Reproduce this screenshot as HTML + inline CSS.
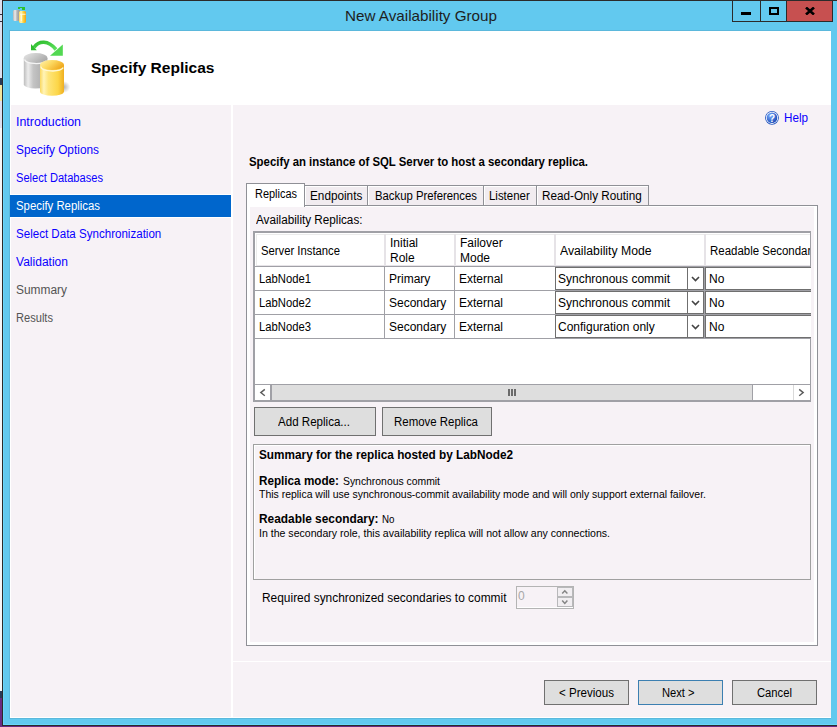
<!DOCTYPE html>
<html><head><meta charset="utf-8"><style>
html,body{margin:0;padding:0;width:837px;height:727px;overflow:hidden;background:#dfe1f0;}
body>div,body>span,body>svg{position:absolute;box-sizing:content-box;}
.t{font-family:"Liberation Sans", sans-serif;line-height:1;white-space:pre;transform-origin:0 0;}
</style></head><body>
<div style="left:0px;top:0px;width:2px;height:703px;background:#f6f6f8;"></div>
<div style="left:0px;top:0px;width:2px;height:128px;background:#dde0ef;"></div>
<div style="left:0px;top:14px;width:2px;height:1px;background:#303040;"></div>
<div style="left:0px;top:21px;width:2px;height:1px;background:#303040;"></div>
<div style="left:0px;top:78px;width:2px;height:7px;background:#2a3b58;"></div>
<div style="left:0px;top:85px;width:2px;height:16px;background:#f2e59e;"></div>
<div style="left:0px;top:691px;width:2px;height:7px;background:#2a3a58;"></div>
<div style="left:0px;top:698px;width:2px;height:29px;background:#6a2a80;"></div>
<div style="left:0px;top:726px;width:837px;height:1px;background:#6a2a80;"></div>
<div style="left:2px;top:0px;width:835px;height:726px;background:#2b2b2b;"></div>
<div style="left:3px;top:1px;width:834px;height:724px;background:#62c9ef;"></div>
<div style="left:3px;top:1px;width:1px;height:724px;background:#6ad6fb;"></div>
<div style="left:3px;top:724px;width:834px;height:1px;background:#6ad6fb;"></div>
<div style="left:9px;top:30px;width:822px;height:689px;background:#5bb8dc;"></div>
<div style="left:10px;top:31px;width:821px;height:74px;background:#ffffff;"></div>
<div style="left:10px;top:105px;width:221px;height:613px;background:#ffffff;"></div>
<div style="left:11px;top:105px;width:220px;height:612px;background:#f7f2f6;"></div>
<div style="left:231px;top:105px;width:2px;height:613px;background:#ffffff;"></div>
<div style="left:233px;top:105px;width:598px;height:613px;background:#ffffff;"></div>
<div style="left:233px;top:105px;width:598px;height:556px;background:#f7f2f6;"></div>
<div style="left:233px;top:662px;width:598px;height:55px;background:#f7f2f6;"></div>
<span id="t0" class="t" style="transform:scaleX(1.0147);left:345px;top:8px;font-size:15px;font-weight:400;color:#1e1e1e;">New Availability Group</span>
<div style="left:732px;top:0px;width:101px;height:22px;background:#2b2b2b;"></div>
<div style="left:733px;top:1px;width:27px;height:20px;background:#62c9ef;"></div>
<div style="left:761px;top:1px;width:25px;height:20px;background:#62c9ef;"></div>
<div style="left:787px;top:1px;width:45px;height:20px;background:#c75050;"></div>
<div style="left:741px;top:12px;width:10px;height:3px;background:#000;"></div>
<div style="left:769px;top:7px;width:6px;height:4px;border:2px solid #000;"></div>
<svg style="left:805px;top:7px" width="10" height="8" viewBox="0 0 10 8"><path d="M1 0.5 L9 7.5 M9 0.5 L1 7.5" stroke="#000" stroke-width="2.6"/></svg>
<svg style="left:0px;top:0px" width="30" height="26" viewBox="0 0 30 26">
<defs><linearGradient id="sg" x1="0" x2="1"><stop offset="0" stop-color="#b4b4b4"/><stop offset="0.3" stop-color="#ececec"/><stop offset="0.55" stop-color="#b8b8b8"/><stop offset="1" stop-color="#8e8e8e"/></linearGradient>
<linearGradient id="sy" x1="0" x2="1"><stop offset="0" stop-color="#fcd860"/><stop offset="0.3" stop-color="#fff4b8"/><stop offset="0.6" stop-color="#fcd440"/><stop offset="1" stop-color="#f0a018"/></linearGradient></defs>
<path d="M14 10 h5 l1 1 v9 l-1 1 h-5 l-1 -1 v-9 z" fill="url(#sg)"/>
<path d="M20 11 h5 l1 1 v10 l-1 1 h-5 l-1 -1 v-10 z" fill="url(#sy)"/>
<path d="M20 14.2 h5.5 M21.3 14 v7" stroke="#fffbe8" stroke-width="1.1" fill="none" opacity="0.9"/>
<g fill="#2dc12d"><rect x="18" y="7" width="2" height="2"/><rect x="19" y="7" width="4" height="1"/><rect x="23" y="7" width="2" height="3"/><rect x="22" y="8" width="2" height="2"/></g>
</svg>
<svg style="left:0px;top:0px" width="80" height="100" viewBox="0 0 80 100">
<defs>
<linearGradient id="gg" x1="0" x2="1"><stop offset="0" stop-color="#bdbdbd"/><stop offset="0.18" stop-color="#ececec"/><stop offset="0.4" stop-color="#c4c4c4"/><stop offset="1" stop-color="#a4a4a4"/></linearGradient>
<linearGradient id="gt" x1="0" y1="0" x2="1" y2="0.6"><stop offset="0" stop-color="#e6e6e6"/><stop offset="0.5" stop-color="#c9c9c9"/><stop offset="1" stop-color="#a9a9a9"/></linearGradient>
<linearGradient id="yg" x1="0" x2="1"><stop offset="0" stop-color="#fad860"/><stop offset="0.16" stop-color="#fff4b8"/><stop offset="0.35" stop-color="#fee57a"/><stop offset="0.75" stop-color="#fcd648"/><stop offset="1" stop-color="#efae20"/></linearGradient>
<linearGradient id="yt" x1="0" y1="0" x2="1" y2="0.5"><stop offset="0" stop-color="#fff2b0"/><stop offset="0.5" stop-color="#fcd860"/><stop offset="1" stop-color="#f0aa20"/></linearGradient>
<radialGradient id="sh" cx="0.3" cy="0.5"><stop offset="0" stop-color="#000" stop-opacity="0.33"/><stop offset="1" stop-color="#000" stop-opacity="0"/></radialGradient>
<linearGradient id="ar" x1="0" y1="0" x2="1" y2="1"><stop offset="0" stop-color="#2fbd2f"/><stop offset="1" stop-color="#5ee25e"/></linearGradient>
</defs>
<ellipse cx="66" cy="87" rx="7" ry="6" fill="url(#sh)"/>
<path d="M23.8 58 v26.5 a11.8 4 0 0 0 23.6 0 v-26.5 z" fill="url(#gg)"/>
<ellipse cx="35.6" cy="58" rx="11.8" ry="5" fill="url(#gt)"/>
<path d="M24.5 59.5 a11.5 4.6 0 0 0 22 1.2" stroke="#f4f4f4" stroke-width="1.3" fill="none"/>
<path d="M40 65 v26.5 a12 4.3 0 0 0 24 0 v-26.5 z" fill="url(#yg)"/>
<ellipse cx="52" cy="65" rx="12" ry="5" fill="url(#yt)"/>
<path d="M40.8 66.5 a11.5 4.6 0 0 0 22.5 1.2" stroke="#fff8d8" stroke-width="1.3" fill="none"/>
<path d="M34 47.5 C 39 40.5, 48 40, 56 49.5" stroke="url(#ar)" stroke-width="3.6" fill="none"/>
<path d="M31 44 L31 50.2 L36.8 50.2 z" fill="#2fbd2f"/>
<path d="M62.8 44.6 L62.8 55.8 L50 55.8 z" fill="#52d852"/>
</svg>
<span id="t1" class="t" style="transform:scaleX(1.0024);left:91px;top:60px;font-size:15.5px;font-weight:700;color:#000;">Specify Replicas</span>
<div style="left:10px;top:194px;width:221px;height:24px;background:#ffffff;"></div>
<div style="left:10px;top:195px;width:221px;height:22px;background:#0066cc;"></div>
<span id="t2" class="t" style="transform:scaleX(1.0364);left:16px;top:116px;font-size:12px;font-weight:400;color:#0a00ff;">Introduction</span>
<span id="t3" class="t" style="transform:scaleX(0.9875);left:16px;top:144px;font-size:12px;font-weight:400;color:#0a00ff;">Specify Options</span>
<span id="t4" class="t" style="transform:scaleX(0.9249);left:16px;top:172px;font-size:12px;font-weight:400;color:#0a00ff;">Select Databases</span>
<span id="t5" class="t" style="transform:scaleX(0.9468);left:16px;top:200px;font-size:12px;font-weight:400;color:#ffffff;">Specify Replicas</span>
<span id="t6" class="t" style="transform:scaleX(0.9638);left:16px;top:228px;font-size:12px;font-weight:400;color:#0a00ff;">Select Data Synchronization</span>
<span id="t7" class="t" style="transform:scaleX(1.0033);left:16px;top:256px;font-size:12px;font-weight:400;color:#0a00ff;">Validation</span>
<span id="t8" class="t" style="transform:scaleX(0.9933);left:16px;top:284px;font-size:12px;font-weight:400;color:#545454;">Summary</span>
<span id="t9" class="t" style="transform:scaleX(0.9246);left:16px;top:312px;font-size:12px;font-weight:400;color:#545454;">Results</span>
<svg style="left:764px;top:110px" width="16" height="16" viewBox="0 0 16 16">
<defs><radialGradient id="hb" cx="0.35" cy="0.3" r="0.8"><stop offset="0" stop-color="#7fb0ff"/><stop offset="1" stop-color="#1040b0"/></radialGradient></defs>
<circle cx="8" cy="7.8" r="6.9" fill="#2456c0"/><circle cx="8" cy="7.8" r="6.1" fill="#ffffff"/><circle cx="8" cy="7.8" r="5.3" fill="url(#hb)"/>
<text x="8" y="12" text-anchor="middle" font-family="Liberation Sans" font-weight="700" font-size="10" fill="#fff">?</text>
</svg>
<span id="t10" class="t" style="transform:scaleX(0.9722);left:784px;top:112px;font-size:12px;font-weight:400;color:#0a00ff;">Help</span>
<span id="t11" class="t" style="transform:scaleX(0.9489);left:249px;top:156px;font-size:12px;font-weight:700;color:#000;">Specify an instance of SQL Server to host a secondary replica.</span>
<div style="left:304px;top:185px;width:64px;height:21px;background:#8f9096;"></div>
<div style="left:305px;top:186px;width:62px;height:19px;background:#ffffff;"></div>
<div style="left:306px;top:187px;width:61px;height:18px;background:#f1ecf0;"></div>
<span id="t12" class="t" style="transform:scaleX(0.9799);left:310px;top:190px;font-size:12px;font-weight:400;color:#000;">Endpoints</span>
<div style="left:367px;top:185px;width:117px;height:21px;background:#8f9096;"></div>
<div style="left:368px;top:186px;width:115px;height:19px;background:#ffffff;"></div>
<div style="left:369px;top:187px;width:114px;height:18px;background:#f1ecf0;"></div>
<span id="t13" class="t" style="transform:scaleX(0.9439);left:375px;top:190px;font-size:12px;font-weight:400;color:#000;">Backup Preferences</span>
<div style="left:483px;top:185px;width:54px;height:21px;background:#8f9096;"></div>
<div style="left:484px;top:186px;width:52px;height:19px;background:#ffffff;"></div>
<div style="left:485px;top:187px;width:51px;height:18px;background:#f1ecf0;"></div>
<span id="t14" class="t" style="transform:scaleX(0.9531);left:489px;top:190px;font-size:12px;font-weight:400;color:#000;">Listener</span>
<div style="left:536px;top:185px;width:113px;height:21px;background:#8f9096;"></div>
<div style="left:537px;top:186px;width:111px;height:19px;background:#ffffff;"></div>
<div style="left:538px;top:187px;width:110px;height:18px;background:#f1ecf0;"></div>
<span id="t15" class="t" style="transform:scaleX(0.9769);left:542px;top:190px;font-size:12px;font-weight:400;color:#000;">Read-Only Routing</span>
<div style="left:246px;top:205px;width:572px;height:441px;background:#8f9096;"></div>
<div style="left:247px;top:206px;width:570px;height:439px;background:#ffffff;"></div>
<div style="left:250px;top:207px;width:564px;height:435px;background:#f7f2f6;"></div>
<div style="left:246px;top:183px;width:59px;height:24px;background:#8f9096;"></div>
<div style="left:247px;top:184px;width:57px;height:23px;background:#ffffff;"></div>
<span id="t16" class="t" style="transform:scaleX(0.9124);left:255px;top:188px;font-size:12px;font-weight:400;color:#000;">Replicas</span>
<span id="t17" class="t" style="transform:scaleX(0.9755);left:256px;top:214px;font-size:12px;font-weight:400;color:#000;">Availability Replicas:</span>
<div style="left:253px;top:231px;width:558px;height:171px;background:#a0a0a6;"></div>
<div style="left:255px;top:233px;width:555px;height:167px;background:#ffffff;"></div>
<div style="left:255px;top:233px;width:555px;height:1px;background:#ffffff;"></div>
<div style="left:256px;top:234px;width:554px;height:1px;background:#ebebeb;"></div>
<div style="left:256px;top:234px;width:1px;height:32px;background:#ebebeb;"></div>
<div style="left:384px;top:234px;width:2px;height:32px;background:#e6e3e7;"></div>
<div style="left:454px;top:234px;width:2px;height:32px;background:#e6e3e7;"></div>
<div style="left:554px;top:234px;width:2px;height:32px;background:#e6e3e7;"></div>
<div style="left:704px;top:234px;width:2px;height:32px;background:#e6e3e7;"></div>
<div style="left:256px;top:265px;width:554px;height:1px;background:#e6e3e7;"></div>
<div style="left:255px;top:266px;width:555px;height:1px;background:#a0a0a6;"></div>
<span id="t18" class="t" style="transform:scaleX(0.9400);left:261px;top:245px;font-size:12px;font-weight:400;color:#000;">Server Instance</span>
<span id="t19" class="t" style="left:390px;top:237px;font-size:12px;font-weight:400;color:#000;">Initial</span>
<span id="t20" class="t" style="left:390px;top:251.5px;font-size:12px;font-weight:400;color:#000;">Role</span>
<span id="t21" class="t" style="left:460px;top:237px;font-size:12px;font-weight:400;color:#000;">Failover</span>
<span id="t22" class="t" style="left:460px;top:251.5px;font-size:12px;font-weight:400;color:#000;">Mode</span>
<span id="t23" class="t" style="transform:scaleX(1.0197);left:560px;top:244.5px;font-size:12px;font-weight:400;color:#000;">Availability Mode</span>
<div style="left:705px;top:234px;width:105px;height:32px;overflow:hidden;"><span class="t" style="position:absolute;left:5px;top:11px;font-size:12px;color:#000;transform:scaleX(0.955)">Readable Secondary</span></div>
<div style="left:255px;top:290px;width:555px;height:1px;background:#a0a0a6;"></div>
<div style="left:384px;top:267px;width:1px;height:23px;background:#a0a0a6;"></div>
<div style="left:454px;top:267px;width:1px;height:23px;background:#a0a0a6;"></div>
<div style="left:704px;top:267px;width:1px;height:23px;background:#a0a0a6;"></div>
<span id="t24" class="t" style="transform:scaleX(0.9388);left:259px;top:273px;font-size:12px;font-weight:400;color:#000;">LabNode1</span>
<span id="t25" class="t" style="left:389px;top:273px;font-size:12px;font-weight:400;color:#000;">Primary</span>
<span id="t26" class="t" style="left:459px;top:273px;font-size:12px;font-weight:400;color:#000;">External</span>
<div style="left:555px;top:267px;width:147px;height:21px;border:1px solid #6f6f6f;background:#ffffff;"></div>
<div style="left:687px;top:268px;width:1px;height:21px;background:#6f6f6f;"></div>
<svg style="left:691px;top:276px" width="9" height="7" viewBox="0 0 9 7"><path d="M1 1 L4.5 4.5 L8 1" stroke="#444" stroke-width="1.6" fill="none"/></svg>
<span id="t27" class="t" style="left:558px;top:273px;font-size:12px;font-weight:400;color:#000;">Synchronous commit</span>
<div style="left:705px;top:267px;width:105px;height:21px;border:1px solid #6f6f6f;border-right:none;background:#fff"></div>
<span id="t28" class="t" style="left:709px;top:273px;font-size:12px;font-weight:400;color:#000;">No</span>
<div style="left:255px;top:314px;width:555px;height:1px;background:#a0a0a6;"></div>
<div style="left:384px;top:291px;width:1px;height:23px;background:#a0a0a6;"></div>
<div style="left:454px;top:291px;width:1px;height:23px;background:#a0a0a6;"></div>
<div style="left:704px;top:291px;width:1px;height:23px;background:#a0a0a6;"></div>
<span id="t29" class="t" style="transform:scaleX(0.9388);left:259px;top:297px;font-size:12px;font-weight:400;color:#000;">LabNode2</span>
<span id="t30" class="t" style="left:389px;top:297px;font-size:12px;font-weight:400;color:#000;">Secondary</span>
<span id="t31" class="t" style="left:459px;top:297px;font-size:12px;font-weight:400;color:#000;">External</span>
<div style="left:555px;top:291px;width:147px;height:21px;border:1px solid #6f6f6f;background:#ffffff;"></div>
<div style="left:687px;top:292px;width:1px;height:21px;background:#6f6f6f;"></div>
<svg style="left:691px;top:300px" width="9" height="7" viewBox="0 0 9 7"><path d="M1 1 L4.5 4.5 L8 1" stroke="#444" stroke-width="1.6" fill="none"/></svg>
<span id="t32" class="t" style="left:558px;top:297px;font-size:12px;font-weight:400;color:#000;">Synchronous commit</span>
<div style="left:705px;top:291px;width:105px;height:21px;border:1px solid #6f6f6f;border-right:none;background:#fff"></div>
<span id="t33" class="t" style="left:709px;top:297px;font-size:12px;font-weight:400;color:#000;">No</span>
<div style="left:255px;top:338px;width:555px;height:1px;background:#a0a0a6;"></div>
<div style="left:384px;top:315px;width:1px;height:23px;background:#a0a0a6;"></div>
<div style="left:454px;top:315px;width:1px;height:23px;background:#a0a0a6;"></div>
<div style="left:704px;top:315px;width:1px;height:23px;background:#a0a0a6;"></div>
<span id="t34" class="t" style="transform:scaleX(0.9388);left:259px;top:321px;font-size:12px;font-weight:400;color:#000;">LabNode3</span>
<span id="t35" class="t" style="left:389px;top:321px;font-size:12px;font-weight:400;color:#000;">Secondary</span>
<span id="t36" class="t" style="left:459px;top:321px;font-size:12px;font-weight:400;color:#000;">External</span>
<div style="left:555px;top:315px;width:147px;height:21px;border:1px solid #6f6f6f;background:#ffffff;"></div>
<div style="left:687px;top:316px;width:1px;height:21px;background:#6f6f6f;"></div>
<svg style="left:691px;top:324px" width="9" height="7" viewBox="0 0 9 7"><path d="M1 1 L4.5 4.5 L8 1" stroke="#444" stroke-width="1.6" fill="none"/></svg>
<span id="t37" class="t" style="left:558px;top:321px;font-size:12px;font-weight:400;color:#000;">Configuration only</span>
<div style="left:705px;top:315px;width:105px;height:21px;border:1px solid #6f6f6f;border-right:none;background:#fff"></div>
<span id="t38" class="t" style="left:709px;top:321px;font-size:12px;font-weight:400;color:#000;">No</span>
<div style="left:255px;top:384px;width:555px;height:1px;background:#a0a0a6;"></div>
<div style="left:255px;top:385px;width:15px;height:15px;background:#ffffff;"></div>
<div style="left:270px;top:384px;width:1px;height:16px;background:#a0a0a6;"></div>
<div style="left:271px;top:384px;width:482px;height:17px;background:#a0a0a6;"></div>
<div style="left:272px;top:385px;width:480px;height:15px;background:#dedede;"></div>
<div style="left:508px;top:389px;width:2px;height:7px;background:#6a6a6a;"></div>
<div style="left:511px;top:389px;width:2px;height:7px;background:#6a6a6a;"></div>
<div style="left:514px;top:389px;width:2px;height:7px;background:#6a6a6a;"></div>
<div style="left:753px;top:385px;width:40px;height:15px;background:#ffffff;"></div>
<div style="left:793px;top:385px;width:1px;height:15px;background:#d9d9d9;"></div>
<div style="left:794px;top:385px;width:15px;height:15px;background:#ffffff;"></div>
<svg style="left:259px;top:388px" width="8" height="10" viewBox="0 0 8 10"><path d="M5.8 1.4 L1.8 4.6 L5.8 7.8" stroke="#5c5c5c" stroke-width="1.4" fill="none"/></svg>
<svg style="left:797px;top:388px" width="8" height="10" viewBox="0 0 8 10"><path d="M2.2 1.4 L6.2 4.6 L2.2 7.8" stroke="#5c5c5c" stroke-width="1.4" fill="none"/></svg>
<div style="left:254px;top:407px;width:120px;height:27px;border:1px solid #707070;background:#dedede;"></div>
<span id="t39" class="t" style="transform:scaleX(0.9636);left:278px;top:416px;font-size:12px;font-weight:400;color:#000;">Add Replica...</span>
<div style="left:382px;top:407px;width:108px;height:27px;border:1px solid #707070;background:#dedede;"></div>
<span id="t40" class="t" style="transform:scaleX(0.9540);left:394px;top:416px;font-size:12px;font-weight:400;color:#000;">Remove Replica</span>
<div style="left:253px;top:444px;width:556px;height:134px;border:1px solid #a0a0a0;background:#f7f2f6;"></div>
<div style="left:254px;top:445px;width:556px;height:1px;background:#ffffff;"></div>
<div style="left:254px;top:445px;width:1px;height:134px;background:#ffffff;"></div>
<span id="t41" class="t" style="transform:scaleX(0.9817);left:259px;top:449px;font-size:12px;font-weight:700;color:#000;">Summary for the replica hosted by LabNode2</span>
<span id="t42" class="t" style="transform:scaleX(0.9752);left:259px;top:474.5px;font-size:12px;font-weight:700;color:#000;">Replica mode:</span>
<span id="t43" class="t" style="transform:scaleX(0.9443);left:343px;top:475.5px;font-size:11px;font-weight:400;color:#000;">Synchronous commit</span>
<span id="t44" class="t" style="transform:scaleX(0.9507);left:259px;top:489px;font-size:11px;font-weight:400;color:#000;">This replica will use synchronous-commit availability mode and will only support external failover.</span>
<span id="t45" class="t" style="transform:scaleX(0.9899);left:259px;top:513px;font-size:12px;font-weight:700;color:#000;">Readable secondary:</span>
<span id="t46" class="t" style="transform:scaleX(0.8889);left:382px;top:514px;font-size:11px;font-weight:400;color:#000;">No</span>
<span id="t47" class="t" style="transform:scaleX(0.9600);left:259px;top:527.5px;font-size:11px;font-weight:400;color:#000;">In the secondary role, this availability replica will not allow any connections.</span>
<span id="t48" class="t" style="transform:scaleX(0.9934);left:262px;top:592px;font-size:12px;font-weight:400;color:#000;">Required synchronized secondaries to commit</span>
<div style="left:516px;top:586px;width:56px;height:21px;border:1px solid #b4b4b4;background:#f7f2f6;"></div>
<span id="t49" class="t" style="left:518px;top:590px;font-size:12px;font-weight:400;color:#a8a8a8;">0</span>
<div style="left:557px;top:587px;width:16px;height:20px;background:#b8b8ba;"></div>
<div style="left:558px;top:588px;width:14px;height:8px;background:#f1eef1;"></div>
<div style="left:558px;top:598px;width:14px;height:8px;background:#f1eef1;"></div>
<div style="left:517px;top:607px;width:56px;height:1px;background:#ffffff;"></div>
<svg style="left:560px;top:589px" width="10" height="6" viewBox="0 0 10 6"><path d="M2.2 4.6 L4.8 1.8 L7.4 4.6" stroke="#858585" stroke-width="1.5" fill="none"/></svg>
<svg style="left:560px;top:599px" width="10" height="6" viewBox="0 0 10 6"><path d="M2.2 1.4 L4.8 4.4 L7.4 1.4" stroke="#858585" stroke-width="1.5" fill="none"/></svg>
<div style="left:544px;top:680px;width:83px;height:23px;border:1px solid #707070;background:#dedede;"></div>
<span id="t50" class="t" style="transform:scaleX(0.9644);left:559px;top:686.5px;font-size:12px;font-weight:400;color:#000;">&lt; Previous</span>
<div style="left:638px;top:680px;width:83px;height:23px;border:1px solid #3c7fb1;background:#dedede;"></div>
<span id="t51" class="t" style="transform:scaleX(0.9310);left:662px;top:686.5px;font-size:12px;font-weight:400;color:#000;">Next &gt;</span>
<div style="left:732px;top:680px;width:83px;height:23px;border:1px solid #707070;background:#dedede;"></div>
<span id="t52" class="t" style="transform:scaleX(0.9368);left:757px;top:686.5px;font-size:12px;font-weight:400;color:#000;">Cancel</span>
</body></html>
